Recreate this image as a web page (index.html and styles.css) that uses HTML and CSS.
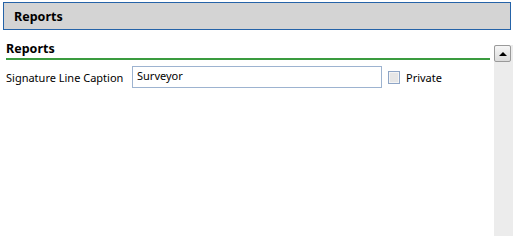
FILE: index.html
```html
<!DOCTYPE html>
<html>
<head>
<meta charset="utf-8">
<link rel="stylesheet" href="styles.css">
</head>
<body>
<div class="page">
  <div class="titlebar"><span class="title">Reports</span></div>
  <div class="main">
    <div class="content">
      <div class="section-head">Reports</div>
      <div class="row">
        <label class="caption">Signature Line Caption</label>
        <div class="input">Surveyor</div>
        <span class="check"></span>
        <span class="check-label">Private</span>
      </div>
    </div>
    <div class="scrollbar">
      <div class="scroll-btn"><span class="arrow"></span></div>
    </div>
  </div>
</div>
</body>
</html>
```
FILE: styles.css
```css
html, body {
  margin: 0;
  padding: 0;
  background: #ffffff;
  width: 513px;
  height: 236px;
  overflow: hidden;
}
.page {
  font-family: "Noto Sans", "Open Sans", sans-serif;
  color: #000;
  height: 236px;
  display: flex;
  flex-direction: column;
}
.titlebar {
  margin: 2px 2px 0 3px;
  height: 26px;
  border: 1px solid #2563a8;
  background: #d4d4d4;
  display: flex;
  align-items: center;
  padding-left: 10px;
}
.title {
  font-weight: bold;
  font-size: 12.5px;
}
.main {
  flex: 1;
  display: flex;
  margin-top: 11px;
}
.content {
  flex: 1;
  padding-left: 6px;
  padding-right: 4px;
}
.section-head {
  font-weight: bold;
  font-size: 12.5px;
  height: 16px;
  line-height: 16px;
  border-bottom: 2px solid #3a9b3f;
  padding-bottom: 1px;
}
.row {
  display: flex;
  align-items: center;
  margin-top: 6px;
  font-size: 11px;
}
.caption {
  width: 126px;
  white-space: nowrap;
}
.input {
  box-sizing: border-box;
  width: 250px;
  height: 22px;
  border: 1px solid #9db3d0;
  padding-left: 4px;
  line-height: 18px;
}
.check {
  box-sizing: border-box;
  width: 12px;
  height: 13px;
  margin-left: 6px;
  border: 1px solid #8ea5c6;
  background: #e6e6e6;
  box-shadow: inset 0 0 0 1px #f4f4f4;
}
.check-label {
  margin-left: 6px;
}
.scrollbar {
  width: 19px;
  background: #ececec;
  margin-top: 4px;
}
.scroll-btn {
  box-sizing: border-box;
  width: 17px;
  height: 17px;
  border: 1px solid #9a9a9a;
  border-radius: 2px;
  background: linear-gradient(#f6f6f6, #dcdcdc);
  display: flex;
  align-items: center;
  justify-content: center;
}
.arrow {
  width: 0;
  height: 0;
  border-left: 4px solid transparent;
  border-right: 4px solid transparent;
  border-bottom: 4px solid #000;
}
```
